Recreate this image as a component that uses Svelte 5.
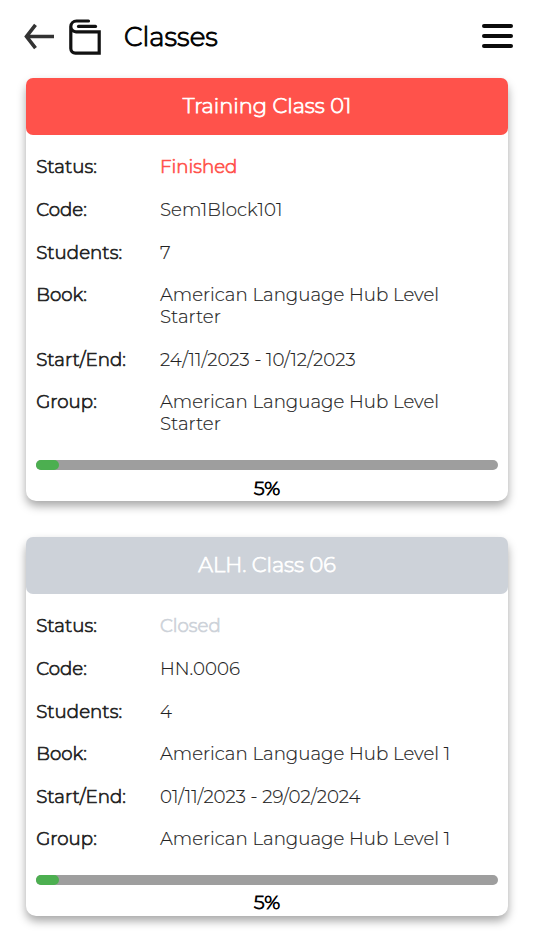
<script>
    const classes = [
        {
            name: "Training Class 01",
            status: "Finished",
            tone: "finished",
            code: "Sem1Block101",
            students: 7,
            book: "American Language Hub Level Starter",
            dates: "24/11/2023 - 10/12/2023",
            group: "American Language Hub Level Starter",
            progress: 5
        },
        {
            name: "ALH. Class 06",
            status: "Closed",
            tone: "closed",
            code: "HN.0006",
            students: 4,
            book: "American Language Hub Level 1",
            dates: "01/11/2023 - 29/02/2024",
            group: "American Language Hub Level 1",
            progress: 5
        }
    ];
</script>

<header>
    <button class="back" aria-label="Back">
        <svg width="32" height="28" viewBox="0 0 32 28" fill="none" stroke="#333" stroke-width="3.6">
            <path d="M12.5 2.8 L3.5 14.5 L12.5 26.2 M3 14.5 H31" />
        </svg>
    </button>
    <svg class="book" width="34" height="38" viewBox="0 0 34 38" fill="none" stroke="#111" stroke-width="3.2" stroke-linecap="round" stroke-linejoin="miter">
        <path d="M20.5 3 H8.5 A5.7 5.7 0 0 0 2.8 8.5 V30.6 A4.6 4.6 0 0 0 7.4 35.2 H31.2 V13.8 H8.3 A5.2 5.2 0 0 1 2.8 8.7" />
        <path d="M10.5 8.4 H27.5" />
    </svg>
    <h1>Classes</h1>
    <button class="menu" aria-label="Menu">
        <span></span>
        <span></span>
        <span></span>
    </button>
</header>

<main>
    {#each classes as item}
        <section class="card {item.tone}">
            <h2>{item.name}</h2>
            <dl>
                <dt>Status:</dt>
                <dd class="status">{item.status}</dd>
                <dt>Code:</dt>
                <dd>{item.code}</dd>
                <dt>Students:</dt>
                <dd>{item.students}</dd>
                <dt>Book:</dt>
                <dd>{item.book}</dd>
                <dt>Start/End:</dt>
                <dd>{item.dates}</dd>
                <dt>Group:</dt>
                <dd>{item.group}</dd>
            </dl>
            <div class="bar">
                <div class="fill" style="width:{item.progress}%;"></div>
            </div>
            <p class="percent">{item.progress}%</p>
        </section>
    {/each}
</main>

<style>
    :global(body){
        background: #fff;
        font-family: Montserrat, Inter, "Open Sans", sans-serif;
        font-weight: 300;
        color: #222;
    }
    header{
        display: flex;
        align-items: center;
        height: 72px;
        padding: 0 21px 0 23px;
    }
    button{
        border: 0;
        padding: 0;
        background: none;
    }
    .back{
        display: flex;
    }
    .book{
        margin-left: 13px;
        margin-top: 2px;
    }
    h1{
        margin: 0 auto 0 22px;
        padding-top: 2px;
        font-size: 26.2px;
        font-weight: 300;
        line-height: 32px;
        color: #000;
        -webkit-text-stroke: 0.9px;
    }
    .menu{
        display: flex;
        flex-direction: column;
        gap: 5.7px;
        width: 31px;
    }
    .menu span{
        height: 4px;
        border-radius: 2px;
        background: #0c0c0c;
    }
    main{
        display: flex;
        flex-direction: column;
        gap: 36px;
        padding: 6px 26px 34px;
    }
    .card{
        border-radius: 10px;
        background: #fff;
        box-shadow: 0 5px 10px rgba(0,0,0,0.35);
    }
    h2{
        margin: 0;
        border-radius: 7px;
        background: #ff524b;
        color: #fff;
        font-size: 20.9px;
        font-weight: 300;
        line-height: 56.6px;
        text-align: center;
        -webkit-text-stroke: 0.75px;
    }
    .closed h2{
        background: #cdd2d9;
    }
    dl{
        display: grid;
        grid-template-columns: 123.8px 1fr;
        row-gap: 20.6px;
        margin: 0;
        padding: 21.9px 50px 24.3px 10.2px;
        font-size: 18.2px;
        line-height: 22px;
    }
    dt{
        letter-spacing: 0.05px;
        -webkit-text-stroke: 0.7px;
    }
    dd{
        margin: 0;
        -webkit-text-stroke: 0.15px;
    }
    .status{
        color: #ff524b;
        -webkit-text-stroke: 0.7px;
    }
    .closed .status{
        color: #cdd2d9;
    }
    .bar{
        height: 10.4px;
        margin: 0 10.3px;
        border-radius: 6px;
        background: #9e9e9e;
    }
    .fill{
        height: 100%;
        border-radius: 6px;
        background: #4caf50;
    }
    .percent{
        margin: 0;
        padding: 6.4px 0 2.4px;
        font-size: 19.5px;
        line-height: 22px;
        text-align: center;
        color: #000;
        -webkit-text-stroke: 0.8px;
    }
</style>
